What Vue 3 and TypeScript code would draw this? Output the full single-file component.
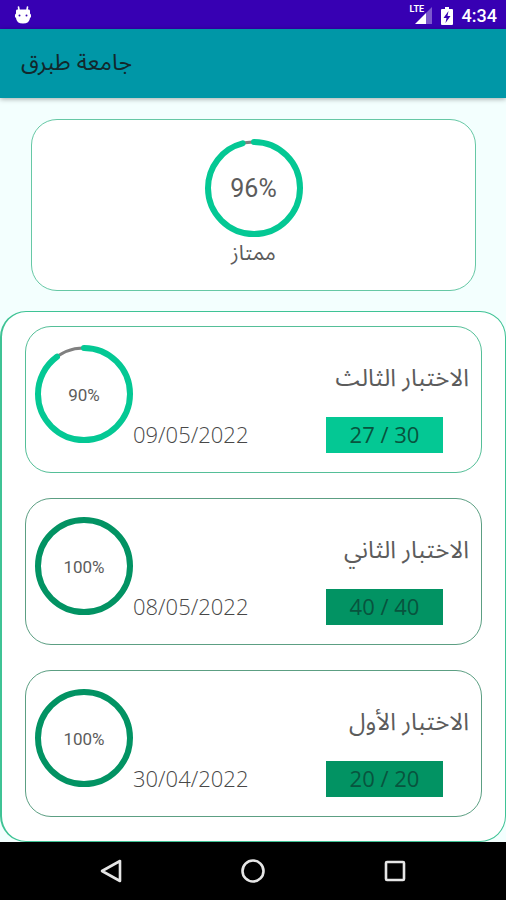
<script setup lang="ts">
interface Exam {
  title: string
  date: string
  score: number
  total: number
}

const pageTitle: string = 'جامعة طبرق'
const overall = { percent: 96, grade: 'ممتاز' }

const exams: Exam[] = [
  { title: 'الاختبار الثالث', date: '09/05/2022', score: 27, total: 30 },
  { title: 'الاختبار الثاني', date: '08/05/2022', score: 40, total: 40 },
  { title: 'الاختبار الأول', date: '30/04/2022', score: 20, total: 20 },
]

const percentOf = (exam: Exam): number => Math.round((exam.score / exam.total) * 100)
</script>

<template>
  <div class="screen">
    <div class="status-bar">
      <svg class="droid" viewBox="0 0 18 20" aria-hidden="true">
        <path d="M4.500 2L5 5M13.500 2L13 5" stroke="#fff" stroke-width="1.600" stroke-linecap="round" />
        <path d="M3 4.500H15Q16 4.500 16 6V8.500Q17.500 9 17 12L16 13Q15.500 18.500 9 18.500T2 13L1 12Q.5 9 2 8.500V6Q2 4.500 3 4.500Z" fill="#fff" />
        <circle cx="5.500" cy="10.500" r="1" fill="#3700b3" />
        <circle cx="12.500" cy="10.500" r="1" fill="#3700b3" />
      </svg>
      <div class="status-right">
        <div class="signal">
          <svg class="bars" viewBox="0 0 17 17" aria-hidden="true">
            <path d="M17 0V17H11V6Z" fill="#fff" opacity="0.350" />
            <path d="M11 6V17H0Z" fill="#fff" />
          </svg>
          <span class="lte">LTE</span>
        </div>
        <svg class="battery" viewBox="0 0 12 18" aria-hidden="true">
          <path d="M4 0H8V2H11Q12 2 12 3V17Q12 18 11 18H1Q0 18 0 17V3Q0 2 1 2H4Z" fill="#fff" />
          <path d="M7.500 4L2.500 11H5.500L4.500 16L9.500 9H6.500Z" fill="#3700b3" />
        </svg>
        <span class="clock">4:34</span>
      </div>
    </div>

    <header class="app-bar">
      <h1 dir="rtl">{{ pageTitle }}</h1>
    </header>

    <main class="content">
      <section class="summary">
        <div class="ring bright">
          <svg viewBox="0 0 98 98" aria-hidden="true">
            <circle class="track" cx="49" cy="49" r="46" />
            <circle class="value" cx="49" cy="49" r="46" pathLength="100" :stroke-dasharray="`${overall.percent} 100`" />
          </svg>
          <span class="percent large">{{ overall.percent }}%</span>
        </div>
        <p class="grade" dir="rtl">{{ overall.grade }}</p>
      </section>

      <section class="panel">
        <article
          v-for="exam in exams"
          :key="exam.date"
          class="exam"
          :class="percentOf(exam) === 100 ? 'full' : 'bright'"
        >
          <div class="ring">
            <svg viewBox="0 0 98 98" aria-hidden="true">
              <circle class="track" cx="49" cy="49" r="46" />
              <circle class="value" cx="49" cy="49" r="46" pathLength="100" :stroke-dasharray="`${percentOf(exam)} 100`" />
            </svg>
            <span class="percent">{{ percentOf(exam) }}%</span>
          </div>
          <div class="details">
            <h2 dir="rtl">{{ exam.title }}</h2>
            <div class="meta">
              <time>{{ exam.date }}</time>
              <span class="score">{{ exam.score }} / {{ exam.total }}</span>
            </div>
          </div>
        </article>
      </section>
    </main>

    <nav class="nav-bar">
      <button type="button" aria-label="Back">
        <svg viewBox="0 0 24 24"><path d="M21 2V22L3 12Z" /></svg>
      </button>
      <button type="button" aria-label="Home">
        <svg viewBox="0 0 24 24"><circle cx="12" cy="12" r="10.500" /></svg>
      </button>
      <button type="button" aria-label="Recent apps">
        <svg viewBox="0 0 24 24"><rect x="3" y="3" width="18" height="18" rx="1" /></svg>
      </button>
    </nav>
  </div>
</template>

<style>
body {
  margin: 0;
  background: #f3fffe;
}
</style>

<style scoped>
.screen {
  display: flex;
  flex-direction: column;
  min-height: 100vh;
  background: #f3fffe;
  color: #5c5c5c;
  font-family: "Open Sans", "Noto Sans Arabic", "DejaVu Sans", sans-serif;
}

.status-bar {
  display: flex;
  align-items: center;
  justify-content: space-between;
  height: 29px;
  padding: 0 9px 0 14px;
  background: #3700b3;
  color: #fff;
}

.droid {
  width: 18px;
  height: 20px;
}

.status-right {
  display: flex;
  align-items: center;
  gap: 9px;
  padding-top: 2px;
}

.signal {
  position: relative;
  display: flex;
  justify-content: flex-end;
  width: 22px;
}

.lte {
  position: absolute;
  top: -2px;
  left: 0;
  font: 700 9px/9px Roboto, sans-serif;
}

.bars {
  width: 17px;
  height: 17px;
}

.battery {
  width: 12px;
  height: 18px;
}

.clock {
  font: 500 18px/20px Roboto, sans-serif;
}

.app-bar {
  display: flex;
  align-items: center;
  height: 69px;
  padding: 0 21px;
  background: #0097a7;
  box-shadow: 0 1px 5px rgba(0, 0, 0, 0.35);
}

h1 {
  margin: 0;
  padding-bottom: 6px;
  color: #12282c;
  font-size: 23px;
  font-weight: 400;
  line-height: 30px;
}

.content {
  display: flex;
  flex: 1;
  flex-direction: column;
  gap: 20px;
  padding-top: 21px;
}

.summary {
  display: flex;
  flex-direction: column;
  align-items: center;
  height: 151px;
  margin: 0 30px 0 31px;
  padding-top: 19px;
  border: 1px solid #66c8a5;
  border-radius: 26px;
  background: #fff;
}

.ring {
  position: relative;
  display: grid;
  flex: none;
  place-items: center;
  width: 98px;
  height: 98px;
}

.ring svg {
  grid-area: 1 / 1;
  width: 98px;
  height: 98px;
  transform: rotate(-90deg);
}

.ring circle {
  fill: none;
}

.track {
  stroke: #808080;
  stroke-width: 3;
}

.value {
  stroke: var(--accent);
  stroke-width: 6;
  stroke-linecap: round;
}

.percent {
  grid-area: 1 / 1;
  padding-top: 2px;
  font: 400 17px/20px Roboto, sans-serif;
}

.percent.large {
  font-size: 25px;
  line-height: 30px;
}

.grade {
  margin: 0;
  font-size: 21px;
  line-height: 30px;
}

.bright {
  --accent: #04c894;
  --outline: #55bf98;
}

.full {
  --accent: #029363;
  --outline: #5c9f83;
}

.panel {
  display: flex;
  flex: 1;
  flex-direction: column;
  gap: 25px;
  padding: 14px 23px 24px;
  border: 1px solid #3fc395;
  border-left-width: 2px;
  border-radius: 26px;
  background: #fff;
}

.exam {
  display: flex;
  height: 127px;
  padding: 18px 12px 0 9px;
  border: 1px solid var(--outline);
  border-radius: 26px;
  background: #fff;
}

.details {
  display: flex;
  flex: 1;
  flex-direction: column;
  gap: 18px;
  padding-top: 10px;
}

h2 {
  margin: 0;
  font-size: 24px;
  font-weight: 400;
  line-height: 44px;
}

.meta {
  display: flex;
  align-items: flex-start;
  justify-content: space-between;
  padding-right: 26px;
  color: #484848;
  font-size: 22px;
  font-weight: 300;
  line-height: 34px;
}

.score {
  width: 117px;
  padding-bottom: 2px;
  background: var(--accent);
  color: #08543e;
  font-weight: 400;
  text-align: center;
}

.nav-bar {
  display: flex;
  align-items: center;
  justify-content: center;
  gap: 94px;
  height: 58px;
  background: #000;
}

.nav-bar button {
  display: grid;
  place-items: center;
  width: 48px;
  height: 48px;
  padding: 0;
  border: 0;
  background: transparent;
}

.nav-bar svg {
  width: 24px;
  height: 24px;
  fill: none;
  stroke: #e6e6e6;
  stroke-width: 2.6;
  stroke-linejoin: round;
}
</style>
